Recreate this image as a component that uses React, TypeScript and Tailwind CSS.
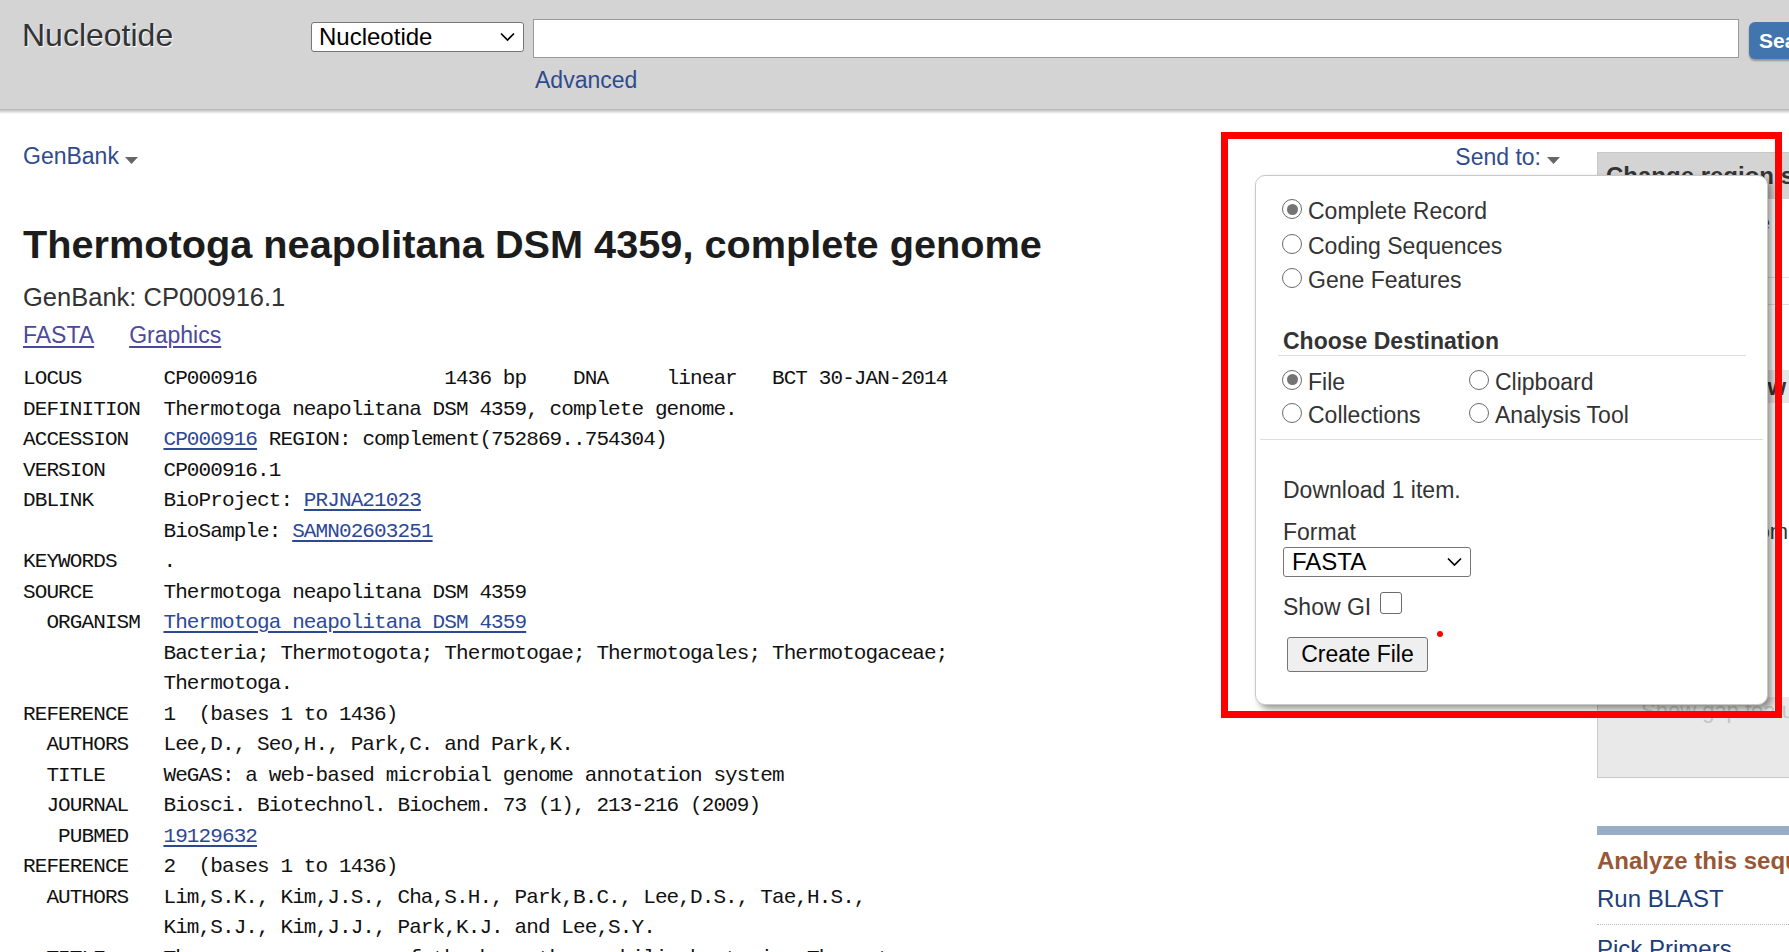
import React from "react";

const Tri = ({ className = "" }: { className?: string }) => (
  <svg width="13" height="7" viewBox="0 0 13 7" className={className}>
    <path d="M0 0 H13 L6.5 7 Z" fill="#666" />
  </svg>
);

const Chevron = () => (
  <svg width="15" height="9" viewBox="0 0 15 9" className="absolute right-[8px] top-1/2 -translate-y-1/2">
    <polyline points="1,1 7.5,7.5 14,1" fill="none" stroke="#000" strokeWidth="1.7" />
  </svg>
);

const Radio = ({ checked = false, mt = "mt-[5px]" }: { checked?: boolean; mt?: string }) => (
  <span
    className={`${mt} w-[20px] h-[20px] rounded-full border-[1.5px] border-[#6b6b6b] bg-white shrink-0 flex items-center justify-center`}
  >
    {checked && <span className="w-[11px] h-[11px] rounded-full bg-[#747474]" />}
  </span>
);

const L = ({ children }: { children: React.ReactNode }) => (
  <a className="text-[#2d4896] underline underline-offset-[3px] cursor-pointer">{children}</a>
);

export default function App() {
  return (
    <div className="relative w-[1789px] h-[952px] overflow-hidden bg-white font-['Liberation_Sans',Arial,sans-serif]">
      {/* Header */}
      <header className="h-[109px] bg-[#d4d4d4] flex">
        <div className="w-[311px] shrink-0 pl-[22px] pt-[17px] text-[32px] leading-[36px] text-[#333] [text-shadow:1px_1px_1px_#fff]">
          Nucleotide
        </div>
        <div className="flex flex-col pt-[19px] shrink-0">
          <div className="flex items-start">
            <div className="relative mt-[3px] w-[213px] h-[30px] shrink-0 bg-white border border-[#767676] rounded-[3px] flex items-center pl-[7px] text-[24px] leading-[28px] text-black">
              Nucleotide
              <Chevron />
            </div>
            <div className="ml-[9px] w-[1206px] h-[39px] shrink-0 bg-white border border-[#9a9a9a]" />
            <button className="ml-[10px] mt-[3px] h-[37px] w-[110px] shrink-0 rounded-[6px] bg-[#4274ad] text-white font-bold text-[21px] text-left pl-[10px] shadow-[0_2px_2px_rgba(0,0,0,0.3)]">
              Search
            </button>
          </div>
          <a className="ml-[224px] mt-[8px] text-[23px] leading-[26px] text-[#2f4b8e] cursor-pointer">Advanced</a>
        </div>
      </header>
      <div className="h-[5px] bg-linear-to-b from-[#b3b3b3] to-white" />

      {/* Main */}
      <div className="flex">
        <div className="w-[1597px] shrink-0 pl-[23px] pr-[37px] pt-[29px]">
          <div className="flex justify-between items-start">
            <div className="flex items-start text-[23px] leading-[26px] text-[#2f4b8e]">
              <span>GenBank</span>
              <Tri className="ml-[6px] mt-[14px]" />
            </div>
            <div className="flex items-start text-[23px] leading-[26px] text-[#2f4b8e] mt-[1px]">
              <span>Send to:</span>
              <Tri className="ml-[6px] mt-[13px]" />
            </div>
          </div>
          <h1 className="mt-[52px] text-[39.7px] leading-[44px] font-bold text-[#1c1c1c] whitespace-nowrap">
            Thermotoga neapolitana DSM 4359, complete genome
          </h1>
          <div className="mt-[17px] text-[25.5px] leading-[28px] text-[#333]">GenBank: CP000916.1</div>
          <div className="mt-[11px] flex text-[23px] leading-[26px] text-[#4b4a9a]">
            <a className="underline underline-offset-[3px] cursor-pointer">FASTA</a>
            <a className="ml-[35px] underline underline-offset-[3px] cursor-pointer">Graphics</a>
          </div>
          <pre className="mt-[16px] font-['Liberation_Mono','Courier_New',monospace] text-[21px] leading-[30.5px] tracking-[-0.9px] text-[#111] whitespace-pre">
{`LOCUS       CP000916                1436 bp    DNA     linear   BCT 30-JAN-2014
DEFINITION  Thermotoga neapolitana DSM 4359, complete genome.
ACCESSION   `}<L>CP000916</L>{` REGION: complement(752869..754304)
VERSION     CP000916.1
DBLINK      BioProject: `}<L>PRJNA21023</L>{`
            BioSample: `}<L>SAMN02603251</L>{`
KEYWORDS    .
SOURCE      Thermotoga neapolitana DSM 4359
  ORGANISM  `}<L>Thermotoga neapolitana DSM 4359</L>{`
            Bacteria; Thermotogota; Thermotogae; Thermotogales; Thermotogaceae;
            Thermotoga.
REFERENCE   1  (bases 1 to 1436)
  AUTHORS   Lee,D., Seo,H., Park,C. and Park,K.
  TITLE     WeGAS: a web-based microbial genome annotation system
  JOURNAL   Biosci. Biotechnol. Biochem. 73 (1), 213-216 (2009)
   PUBMED   `}<L>19129632</L>{`
REFERENCE   2  (bases 1 to 1436)
  AUTHORS   Lim,S.K., Kim,J.S., Cha,S.H., Park,B.C., Lee,D.S., Tae,H.S.,
            Kim,S.J., Kim,J.J., Park,K.J. and Lee,S.Y.
  TITLE     The genome sequence of the hyperthermophilic bacterium Thermotoga`}
          </pre>
        </div>

        {/* Right sidebar */}
        <aside className="w-[300px] shrink-0 mt-[38px]">
          <div className="h-[626px] border border-[#c8c8c8] bg-[#e9e9e9] flex flex-col">
            <div className="h-[46px] bg-[#d4d4d4] pl-[8px] pt-[9px] text-[24px] leading-[28px] font-bold text-[#333] whitespace-nowrap">
              Change region shown
            </div>
            <div className="bg-white px-[8px] pt-[10px] text-[22px] leading-[28px] text-[#333]">
              <div>Whole sequence</div>
              <div>Selected region</div>
              <div className="h-[27px] border-t border-[#ddd] mt-[12px]" />
              <div className="h-[66px] border-t border-[#ddd]" />
            </div>
            <div className="h-[33px] bg-[#e6e6e6] pl-[8px] text-[24px] leading-[33px] font-bold text-[#333]">
              Customize view
            </div>
            <div className="bg-white flex-1 px-[8px] pt-[10px] text-[22px] leading-[34px] text-[#333]">
              <div>Basic Features</div>
              <div>Display options</div>
              <div>Show sequence</div>
              <div>Show reverse complement</div>
            </div>
            <div className="h-[80px] bg-[#e9e9e9] pl-[43px] pt-[0px] text-[22px] leading-[28px] text-[#c4c4c4] whitespace-nowrap">
              Show gap features
            </div>
          </div>
          <div className="mt-[48px] h-[9px] bg-[#97aec6]" />
          <div className="mt-[12px] text-[24px] leading-[28px] font-bold text-[#985735] whitespace-nowrap">
            Analyze this sequence
          </div>
          <div className="mt-[10px] pb-[11px] border-b border-dotted border-[#bbb] text-[24px] leading-[28px] text-[#1d3d78]">
            Run BLAST
          </div>
          <div className="mt-[10px] text-[24px] leading-[28px] text-[#1d3d78]">Pick Primers</div>
        </aside>
      </div>

      {/* Send to popup */}
      <div className="absolute left-[1255px] top-[175px] w-[513px] h-[530px] bg-white border border-[#c8c8c8] rounded-[10px] shadow-[4px_4px_6px_rgba(0,0,0,0.4)] text-[#333]">
        <div className="pt-[18px] pl-[26px] text-[23px]">
          {[
            ["Complete Record", true],
            ["Coding Sequences", false],
            ["Gene Features", false],
          ].map(([t, c]) => (
            <div key={t as string} className="flex items-start h-[34.5px] leading-[34.5px]">
              <Radio checked={c as boolean} />
              <span className="ml-[6px]">{t as string}</span>
            </div>
          ))}
        </div>
        <div className="mt-[29px] ml-[22px] mr-[21px] pl-[5px] h-[29px] border-b border-[#ddd] text-[23px] leading-[28px] font-bold">
          Choose Destination
        </div>
        <div className="mt-[10px] pl-[26px] grid grid-cols-[187px_1fr] text-[23px]">
          {[
            ["File", true],
            ["Clipboard", false],
            ["Collections", false],
            ["Analysis Tool", false],
          ].map(([t, c]) => (
            <div key={t as string} className="flex items-start h-[33.5px] leading-[33.5px]">
              <Radio checked={c as boolean} mt="mt-[4px]" />
              <span className="ml-[6px]">{t as string}</span>
            </div>
          ))}
        </div>
        <div className="mt-[6px] mx-[4px] border-t border-[#ddd]" />
        <div className="pl-[27px] text-[23px] leading-[28px]">
          <div className="mt-[36px]">Download 1 item.</div>
          <div className="mt-[14px]">Format</div>
          <div className="relative mt-[1px] w-[188px] h-[30px] bg-white border border-[#767676] rounded-[3px] flex items-center pl-[8px] text-[24px] text-black">
            FASTA
            <Chevron />
          </div>
          <div className="mt-[16px] flex items-start h-[28px]">
            <span>Show GI</span>
            <span className="ml-[9px] -mt-[1px] w-[22px] h-[22px] border-[1.5px] border-[#6b6b6b] rounded-[3px] bg-white" />
          </div>
          <button className="mt-[16px] ml-[4px] w-[141px] h-[35px] bg-[#efefef] border border-[#767676] rounded-[3px] text-[23px] leading-[28px] text-black">
            Create File
          </button>
        </div>
        <span className="absolute left-[181px] top-[455px] w-[6px] h-[6px] rounded-full bg-[#ff0000]" />
      </div>

      {/* Annotation rectangle */}
      <div className="absolute left-[1221px] top-[132px] w-[561px] h-[586px] border-[7px] border-[#ff0000] pointer-events-none" />
    </div>
  );
}
